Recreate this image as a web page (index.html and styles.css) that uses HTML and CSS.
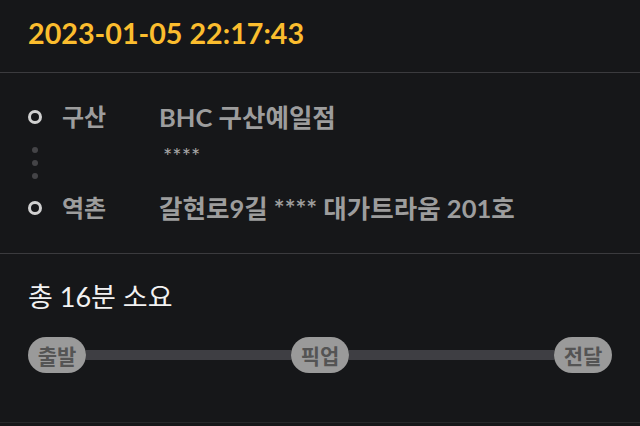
FILE: index.html
```html
<!DOCTYPE html>
<html>
  <head>
    <meta charset="UTF-8">
    <title>배달 내역</title>
    <link rel="stylesheet" href="styles.css">
  </head>
  <body>
    <div class="order">
      <!-- order time -->
      <div class="order-time">2023-01-05 22:17:43</div>

      <!-- pickup / drop-off -->
      <div class="route">
        <div class="stop">
          <span class="ring"></span>
          <span class="area">구산</span>
          <span class="place">BHC 구산예일점</span>
        </div>
        <div class="detail">
          <div class="dots">
            <span class="dot"></span>
            <span class="dot"></span>
            <span class="dot"></span>
          </div>
          <span class="sub">****</span>
        </div>
        <div class="stop">
          <span class="ring"></span>
          <span class="area">역촌</span>
          <span class="place">갈현로9길 **** 대가트라움 201호</span>
        </div>
      </div>

      <!-- duration + steps -->
      <div class="summary">
        <p class="total">총 16분 소요</p>
        <div class="steps">
          <span class="pill">출발</span>
          <span class="bar"></span>
          <span class="pill">픽업</span>
          <span class="bar"></span>
          <span class="pill">전달</span>
        </div>
      </div>
    </div>
  </body>
</html>
```

FILE: styles.css
```css
body {
  margin: 0;
  background-color: #161719;
  font-family: Lato, "Noto Sans CJK KR", sans-serif;
}

.order {
  width: 640px;
}

.order-time {
  height: 66px;
  padding: 0 28px 6px;
  display: flex;
  align-items: center;
  color: #fbbd2e;
  font-size: 28.7px;
  font-weight: bold;
  border-bottom: 1px solid #3b3b3e;
}

.route {
  padding: 29px 28px 30px;
  border-bottom: 1px solid #3b3b3e;
}

.stop {
  display: flex;
  align-items: center;
  height: 30px;
  line-height: 30px;
}

.ring {
  width: 8px;
  height: 8px;
  border: 3px solid #d0d0d0;
  border-radius: 50%;
  flex-shrink: 0;
}

.area {
  width: 97px;
  margin-left: 20px;
  color: #9d9d9d;
  font-size: 24px;
  font-weight: bold;
}

.place {
  color: #9d9d9d;
  font-size: 25.5px;
  font-weight: bold;
}

.detail {
  display: flex;
  height: 61px;
}

.dots {
  width: 14px;
  display: flex;
  flex-direction: column;
  align-items: center;
  justify-content: center;
  gap: 7px;
}

.dot {
  width: 6px;
  height: 6px;
  border-radius: 50%;
  background-color: #444447;
}

.sub {
  margin-left: 121px;
  margin-top: 15px;
  color: #a8a8a8;
  font-size: 22px;
  line-height: 18px;
}

.summary {
  padding: 28px 28px 49px;
  border-bottom: 1px solid #27282a;
}

.total {
  margin: 0;
  line-height: 30px;
  color: #f2f2f2;
  font-size: 27px;
}

.steps {
  display: flex;
  align-items: center;
  margin-top: 25px;
}

.pill {
  width: 58px;
  height: 36px;
  border-radius: 18px;
  background-color: #9a9a9a;
  color: #545454;
  font-size: 21px;
  font-weight: bold;
  display: flex;
  align-items: center;
  justify-content: center;
}

.bar {
  flex: 1;
  height: 10px;
  background-color: #3e3e43;
}
```
